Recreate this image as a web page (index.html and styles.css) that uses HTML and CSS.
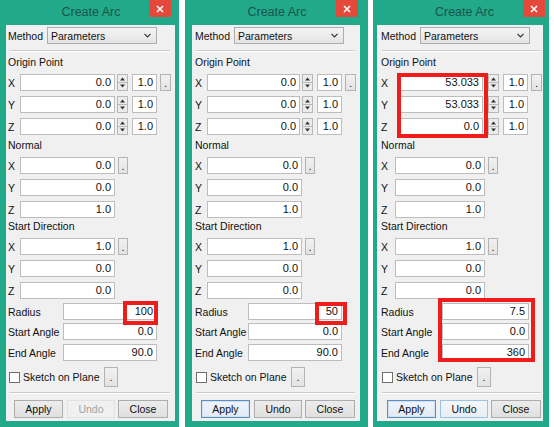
FILE: index.html
```html
<!DOCTYPE html>
<html>
<head>
<meta charset="utf-8">
<link rel="stylesheet" href="styles.css">
</head>
<body>
<div class="stage">

  <div class="panel p1">
    <div class="titlebar"><span class="title">Create Arc</span><span class="close"><svg width="8" height="8" viewBox="0 0 8 8"><path d="M1 1L7 7M7 1L1 7" stroke="#fff" stroke-width="1.6"/></svg></span></div>
    <div class="body">
      <div class="method-row"><span class="mlabel">Method</span><div class="combo"><span>Parameters</span><svg width="7" height="5" viewBox="0 0 7 5"><path d="M0.5 0.8L3.5 3.8L6.5 0.8" fill="none" stroke="#333" stroke-width="1.2"/></svg></div></div>
      <div class="sep"></div>
      <div class="gtitle g-origin">Origin Point</div>
      <div class="frow first"><span class="axis">X</span><span class="num grow">0.0</span><span class="spin"><svg width="11" height="17" viewBox="0 0 11 17"><rect x=".5" y=".5" width="10" height="16" fill="#ececec" stroke="#b8b8b8"/><line x1="1" y1="8.5" x2="10" y2="8.5" stroke="#b8b8b8"/><path d="M3 6.5L5.5 3.5L8 6.5Z" fill="#333"/><path d="M3 10.5L5.5 13.5L8 10.5Z" fill="#333"/></svg></span><span class="num small">1.0</span><span class="dot">.</span></div>
      <div class="frow"><span class="axis">Y</span><span class="num grow">0.0</span><span class="spin"><svg width="11" height="17" viewBox="0 0 11 17"><rect x=".5" y=".5" width="10" height="16" fill="#ececec" stroke="#b8b8b8"/><line x1="1" y1="8.5" x2="10" y2="8.5" stroke="#b8b8b8"/><path d="M3 6.5L5.5 3.5L8 6.5Z" fill="#333"/><path d="M3 10.5L5.5 13.5L8 10.5Z" fill="#333"/></svg></span><span class="num small">1.0</span><span class="dot ghost"></span></div>
      <div class="frow"><span class="axis">Z</span><span class="num grow">0.0</span><span class="spin"><svg width="11" height="17" viewBox="0 0 11 17"><rect x=".5" y=".5" width="10" height="16" fill="#ececec" stroke="#b8b8b8"/><line x1="1" y1="8.5" x2="10" y2="8.5" stroke="#b8b8b8"/><path d="M3 6.5L5.5 3.5L8 6.5Z" fill="#333"/><path d="M3 10.5L5.5 13.5L8 10.5Z" fill="#333"/></svg></span><span class="num small">1.0</span><span class="dot ghost"></span></div>
      <div class="gtitle g-normal">Normal</div>
      <div class="frow first"><span class="axis">X</span><span class="num fixed">0.0</span><span class="dot dot-n">.</span></div>
      <div class="frow"><span class="axis">Y</span><span class="num fixed">0.0</span></div>
      <div class="frow"><span class="axis">Z</span><span class="num fixed">1.0</span></div>
      <div class="gtitle g-sd">Start Direction</div>
      <div class="frow first"><span class="axis">X</span><span class="num fixed">1.0</span><span class="dot dot-n">.</span></div>
      <div class="frow"><span class="axis">Y</span><span class="num fixed">0.0</span></div>
      <div class="frow"><span class="axis">Z</span><span class="num fixed">0.0</span></div>
      <div class="arow a1"><span class="alabel">Radius</span><span class="num wide">100</span></div>
      <div class="arow a2"><span class="alabel">Start Angle</span><span class="num wide">0.0</span></div>
      <div class="arow a3"><span class="alabel">End Angle</span><span class="num wide">90.0</span></div>
      <div class="sketch"><span class="check"></span><span class="stext">Sketch on Plane</span><span class="dot dot-s">.</span></div>
      <div class="sep sep2"></div>
      <div class="btns"><span class="btn apply">Apply</span><span class="btn undo disabled">Undo</span><span class="btn closeb">Close</span></div>
    </div>
    <div class="mark m1"></div>
  </div>

  <div class="panel p2">
    <div class="titlebar"><span class="title">Create Arc</span><span class="close"><svg width="8" height="8" viewBox="0 0 8 8"><path d="M1 1L7 7M7 1L1 7" stroke="#fff" stroke-width="1.6"/></svg></span></div>
    <div class="body">
      <div class="method-row"><span class="mlabel">Method</span><div class="combo"><span>Parameters</span><svg width="7" height="5" viewBox="0 0 7 5"><path d="M0.5 0.8L3.5 3.8L6.5 0.8" fill="none" stroke="#333" stroke-width="1.2"/></svg></div></div>
      <div class="sep"></div>
      <div class="gtitle g-origin">Origin Point</div>
      <div class="frow first"><span class="axis">X</span><span class="num grow">0.0</span><span class="spin"><svg width="11" height="17" viewBox="0 0 11 17"><rect x=".5" y=".5" width="10" height="16" fill="#ececec" stroke="#b8b8b8"/><line x1="1" y1="8.5" x2="10" y2="8.5" stroke="#b8b8b8"/><path d="M3 6.5L5.5 3.5L8 6.5Z" fill="#333"/><path d="M3 10.5L5.5 13.5L8 10.5Z" fill="#333"/></svg></span><span class="num small">1.0</span><span class="dot">.</span></div>
      <div class="frow"><span class="axis">Y</span><span class="num grow">0.0</span><span class="spin"><svg width="11" height="17" viewBox="0 0 11 17"><rect x=".5" y=".5" width="10" height="16" fill="#ececec" stroke="#b8b8b8"/><line x1="1" y1="8.5" x2="10" y2="8.5" stroke="#b8b8b8"/><path d="M3 6.5L5.5 3.5L8 6.5Z" fill="#333"/><path d="M3 10.5L5.5 13.5L8 10.5Z" fill="#333"/></svg></span><span class="num small">1.0</span><span class="dot ghost"></span></div>
      <div class="frow"><span class="axis">Z</span><span class="num grow">0.0</span><span class="spin"><svg width="11" height="17" viewBox="0 0 11 17"><rect x=".5" y=".5" width="10" height="16" fill="#ececec" stroke="#b8b8b8"/><line x1="1" y1="8.5" x2="10" y2="8.5" stroke="#b8b8b8"/><path d="M3 6.5L5.5 3.5L8 6.5Z" fill="#333"/><path d="M3 10.5L5.5 13.5L8 10.5Z" fill="#333"/></svg></span><span class="num small">1.0</span><span class="dot ghost"></span></div>
      <div class="gtitle g-normal">Normal</div>
      <div class="frow first"><span class="axis">X</span><span class="num fixed">0.0</span><span class="dot dot-n">.</span></div>
      <div class="frow"><span class="axis">Y</span><span class="num fixed">0.0</span></div>
      <div class="frow"><span class="axis">Z</span><span class="num fixed">1.0</span></div>
      <div class="gtitle g-sd">Start Direction</div>
      <div class="frow first"><span class="axis">X</span><span class="num fixed">1.0</span><span class="dot dot-n">.</span></div>
      <div class="frow"><span class="axis">Y</span><span class="num fixed">0.0</span></div>
      <div class="frow"><span class="axis">Z</span><span class="num fixed">0.0</span></div>
      <div class="arow a1"><span class="alabel">Radius</span><span class="num wide">50</span></div>
      <div class="arow a2"><span class="alabel">Start Angle</span><span class="num wide">0.0</span></div>
      <div class="arow a3"><span class="alabel">End Angle</span><span class="num wide">90.0</span></div>
      <div class="sketch"><span class="check"></span><span class="stext">Sketch on Plane</span><span class="dot dot-s">.</span></div>
      <div class="sep sep2"></div>
      <div class="btns"><span class="btn apply focus">Apply</span><span class="btn undo">Undo</span><span class="btn closeb">Close</span></div>
    </div>
    <div class="mark m2"></div>
  </div>

  <div class="panel p3">
    <div class="titlebar"><span class="title">Create Arc</span><span class="close"><svg width="8" height="8" viewBox="0 0 8 8"><path d="M1 1L7 7M7 1L1 7" stroke="#fff" stroke-width="1.6"/></svg></span></div>
    <div class="body">
      <div class="method-row"><span class="mlabel">Method</span><div class="combo"><span>Parameters</span><svg width="7" height="5" viewBox="0 0 7 5"><path d="M0.5 0.8L3.5 3.8L6.5 0.8" fill="none" stroke="#333" stroke-width="1.2"/></svg></div></div>
      <div class="sep"></div>
      <div class="gtitle g-origin">Origin Point</div>
      <div class="frow first"><span class="axis">X</span><span class="num grow">53.033</span><span class="spin"><svg width="11" height="17" viewBox="0 0 11 17"><rect x=".5" y=".5" width="10" height="16" fill="#ececec" stroke="#b8b8b8"/><line x1="1" y1="8.5" x2="10" y2="8.5" stroke="#b8b8b8"/><path d="M3 6.5L5.5 3.5L8 6.5Z" fill="#333"/><path d="M3 10.5L5.5 13.5L8 10.5Z" fill="#333"/></svg></span><span class="num small">1.0</span><span class="dot">.</span></div>
      <div class="frow"><span class="axis">Y</span><span class="num grow">53.033</span><span class="spin"><svg width="11" height="17" viewBox="0 0 11 17"><rect x=".5" y=".5" width="10" height="16" fill="#ececec" stroke="#b8b8b8"/><line x1="1" y1="8.5" x2="10" y2="8.5" stroke="#b8b8b8"/><path d="M3 6.5L5.5 3.5L8 6.5Z" fill="#333"/><path d="M3 10.5L5.5 13.5L8 10.5Z" fill="#333"/></svg></span><span class="num small">1.0</span><span class="dot ghost"></span></div>
      <div class="frow"><span class="axis">Z</span><span class="num grow">0.0</span><span class="spin"><svg width="11" height="17" viewBox="0 0 11 17"><rect x=".5" y=".5" width="10" height="16" fill="#ececec" stroke="#b8b8b8"/><line x1="1" y1="8.5" x2="10" y2="8.5" stroke="#b8b8b8"/><path d="M3 6.5L5.5 3.5L8 6.5Z" fill="#333"/><path d="M3 10.5L5.5 13.5L8 10.5Z" fill="#333"/></svg></span><span class="num small">1.0</span><span class="dot ghost"></span></div>
      <div class="gtitle g-normal">Normal</div>
      <div class="frow first"><span class="axis">X</span><span class="num fixed">0.0</span><span class="dot dot-n">.</span></div>
      <div class="frow"><span class="axis">Y</span><span class="num fixed">0.0</span></div>
      <div class="frow"><span class="axis">Z</span><span class="num fixed">1.0</span></div>
      <div class="gtitle g-sd">Start Direction</div>
      <div class="frow first"><span class="axis">X</span><span class="num fixed">1.0</span><span class="dot dot-n">.</span></div>
      <div class="frow"><span class="axis">Y</span><span class="num fixed">0.0</span></div>
      <div class="frow"><span class="axis">Z</span><span class="num fixed">0.0</span></div>
      <div class="arow a1"><span class="alabel">Radius</span><span class="num wide">7.5</span></div>
      <div class="arow a2"><span class="alabel">Start Angle</span><span class="num wide">0.0</span></div>
      <div class="arow a3"><span class="alabel">End Angle</span><span class="num wide">360</span></div>
      <div class="sketch"><span class="check"></span><span class="stext">Sketch on Plane</span><span class="dot dot-s">.</span></div>
      <div class="sep sep2"></div>
      <div class="btns"><span class="btn apply focus">Apply</span><span class="btn undo hover">Undo</span><span class="btn closeb">Close</span></div>
    </div>
    <div class="mark m3a"></div>
    <div class="mark m3b"></div>
  </div>

</div>
</body>
</html>
```

FILE: styles.css
```css
* { box-sizing: border-box; }
body {
  margin: 0;
  background: #ffffff;
  font-family: "Liberation Sans", Arial, sans-serif;
  font-size: 10.5px;
  color: #111;
}
.stage {
  display: flex;
  width: 554px;
  height: 427px;
}
.panel {
  position: relative;
  height: 427px;
  background: #22a98a;
  display: flex;
  flex-direction: column;
  flex: none;
}
.p1 { width: 179px; }
.p2 { width: 183px; margin-left: 6px; }
.p3 { width: 176px; margin-left: 5px; }

.titlebar {
  height: 25px;
  display: flex;
  align-items: flex-start;
  flex: none;
}
.title {
  flex: 1;
  text-align: center;
  padding-left: 33px;
  padding-top: 5px;
  font-size: 12.5px;
  color: #17564c;
}
.close {
  width: 22px;
  height: 17px;
  background: #e5493c;
  display: flex;
  align-items: center;
  justify-content: center;
  margin-right: 8px;
}
.p2 .close { margin-right: 10px; }
.p3 .close { margin-right: 4px; }

.body {
  flex: none;
  height: 396px;
  background: #f0f0f0;
  display: flex;
  flex-direction: column;
  padding: 0 4px 3px 2px;
}
.p1 .body { margin: 0 4px 0 6px; }
.p2 .body { margin: 0 8px 0 7px; padding-left: 3px; }
.p3 .body { margin: 0 6px 0 4px; padding-left: 4px; padding-right: 1px; }

.method-row {
  margin-top: 2px;
  height: 17px;
  display: flex;
  align-items: center;
}
.mlabel { width: 39px; }
.combo {
  width: 110px;
  height: 17px;
  border: 1px solid #adadad;
  background: linear-gradient(#f4f4f4, #e4e4e4);
  display: flex;
  align-items: center;
  justify-content: space-between;
  padding: 0 5px 0 3px;
}

.sep {
  margin: 6px 1px 0 1px;
  border-top: 1px solid #cacaca;
  border-bottom: 1px solid #ffffff;
}
.sep2 { margin-top: 5px; }

.gtitle {
  height: 16px;
  line-height: 16px;
}
.g-origin { margin-top: 2px; }
.g-normal { margin-top: 2px; }
.g-sd { margin-top: 0; }

.frow {
  display: flex;
  align-items: center;
  height: 17px;
  margin-top: 5px;
}
.frow.first { margin-top: 4px; }
.axis { width: 12px; flex: none; }
.p3 .axis { width: 14px; }

.num {
  height: 17px;
  border: 1px solid #bdbdbd;
  background: #ffffff;
  text-align: right;
  padding-right: 3px;
  font-size: 11px;
  line-height: 15px;
  color: #111;
  flex: none;
}
.num.grow { flex: 1; }
.p3 .num.grow { margin-left: 5px; }
.num.fixed { width: 95px; }
.p3 .num.fixed { width: 90px; }
.num.small { width: 25px; margin-left: 4px; padding-right: 3px; }
.num.wide { width: 94px; margin-right: 14px; }
.p3 .num.wide { width: 87px; margin-right: 13px; }

.spin { width: 11px; height: 17px; margin-left: 2px; flex: none; display: block; }
.spin svg { display: block; }
.p3 .spin { margin-left: 5px; }

.dot {
  width: 11px;
  height: 17px;
  margin-left: 3px;
  flex: none;
  border: 1px solid #b3b3b3;
  background: linear-gradient(#f1f1f1, #e3e3e3);
  text-align: center;
  font-size: 11px;
  line-height: 16px;
  color: #222;
}
.dot.ghost { visibility: hidden; }
.dot-n { width: 10px; }
.dot-s { width: 14px; height: 20px; margin-left: 0; line-height: 19px; }

.arow {
  display: flex;
  align-items: center;
  height: 17px;
}
.a1 { margin-top: 4px; }
.a2 { margin-top: 3px; }
.a3 { margin-top: 4px; }
.alabel { flex: 1; }

.sketch {
  display: flex;
  align-items: center;
  height: 20px;
  margin-top: 6px;
}
.check {
  width: 11px;
  height: 11px;
  margin-left: 1px;
  border: 1px solid #707070;
  background: #ffffff;
  flex: none;
}
.stext { width: 84px; padding-left: 3px; flex: none; }

.btns {
  display: flex;
  margin-top: 6px;
  padding-left: 6px;
  height: 18px;
}
.btn {
  height: 18px;
  border: 1px solid #adadad;
  background: linear-gradient(#ececec, #e0e0e0);
  display: flex;
  align-items: center;
  justify-content: center;
  color: #111;
  flex: none;
}
.apply { width: 49px; }
.undo { width: 48px; margin-left: 4px; }
.closeb { width: 50px; margin-left: 3px; }
.btn.disabled {
  border-color: #e2e2e2;
  background: #f0f0f0;
  color: #a3a3a3;
}
.btn.focus {
  border-color: #5b8fc4;
  box-shadow: inset 0 0 0 1px #cfe0f2;
  background: linear-gradient(#eef4fb, #e1ebf6);
}
.btn.hover {
  border-color: #9cc2e6;
  background: linear-gradient(#f3f7fb, #e8eef5);
}

.mark {
  position: absolute;
  border: 4px solid #f01b1b;
}
.m1 { left: 123px; top: 301px; width: 35px; height: 24px; }
.m2 { left: 130px; top: 302px; width: 32px; height: 23px; }
.m3a { left: 24px; top: 73px; width: 91px; height: 65px; }
.m3b { left: 65px; top: 298px; width: 97px; height: 64px; }
```
